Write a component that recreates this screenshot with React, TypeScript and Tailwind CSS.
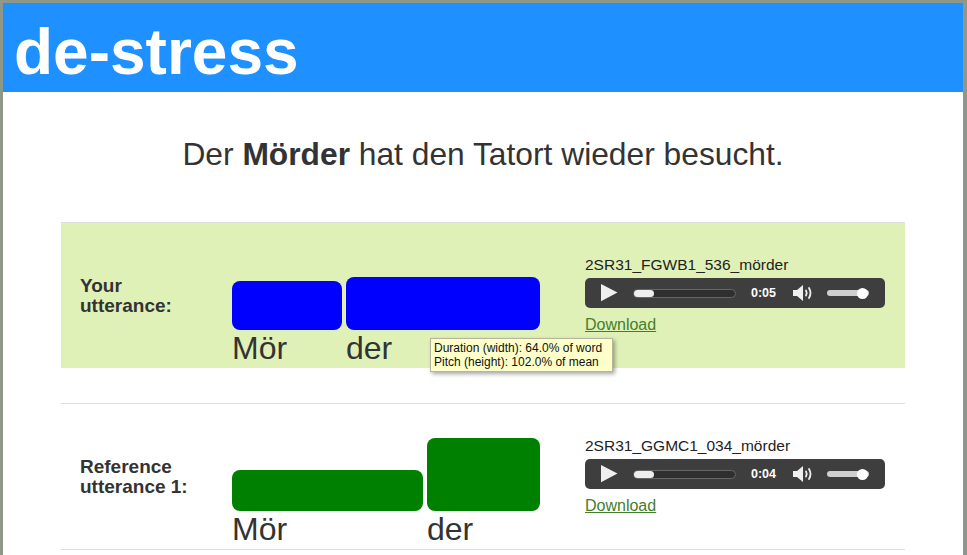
import React from 'react'

type Word = { text: string; w: number; h: number }

const font = { fontFamily: '"Liberation Sans", Arial, sans-serif' }

const Player = ({ time }: { time: string }) => (
  <div className="flex h-[30px] w-[300px] items-center rounded-[5px] bg-[#3e3e3e]">
    <svg width="17" height="18" viewBox="0 0 17 18" className="ml-[16px]">
      <path d="M0 0 L16.5 8.6 L0 17.2 Z" fill="#efefef" />
    </svg>
    <div className="ml-[15px] flex h-[9px] w-[103px] rounded-full border border-[#666] bg-[#2f2f2f]">
      <div className="h-full w-[20px] rounded-full bg-[#eeeeee]" />
    </div>
    <span className="ml-[15px] text-[12.5px] font-bold text-white">{time}</span>
    <svg width="23" height="18" viewBox="0 0 23 18" className="ml-[16px]">
      <path d="M1 6 H5 L11 1 V17 L5 12 H1 Z" fill="#efefef" />
      <path d="M14 6.5 Q15.5 9 14 11.5" stroke="#efefef" strokeWidth="1.8" fill="none" strokeLinecap="round" />
      <path d="M17 4 Q20 9 17 14" stroke="#efefef" strokeWidth="1.8" fill="none" strokeLinecap="round" />
    </svg>
    <div className="ml-[12px] flex h-[6px] w-[42px] items-center justify-end rounded-full bg-[#cfcfcf] pr-[1px]">
      <div className="h-[11px] w-[11px] rounded-full bg-white" />
    </div>
  </div>
)

const Row = ({
  label,
  words,
  color,
  file,
  time,
  bg,
  children,
}: {
  label: React.ReactNode
  words: Word[]
  color: string
  file: string
  time: string
  bg: string
  children?: React.ReactNode
}) => (
  <div className={`relative flex h-[145px] items-center ${bg}`}>
    <div className="w-[171px] pl-[19px] text-[19px] font-bold leading-[20px] text-[#333]">{label}</div>
    <div className="flex w-[353px] items-end gap-[4px] self-end pb-[2px]">
      {words.map((wd) => (
        <div key={wd.text + wd.w} className="flex flex-col">
          <div className="rounded-[8px]" style={{ width: wd.w, height: wd.h, backgroundColor: color }} />
          <span className="text-[32px] leading-[36px] text-[#333]">{wd.text}</span>
        </div>
      ))}
    </div>
    <div className="flex flex-col">
      <span className="text-[15.5px] leading-[18px] text-[#222]">{file}</span>
      <div className="mt-[4px]">
        <Player time={time} />
      </div>
      <a className="mt-[7px] text-[16px] leading-[20px] text-[#44802c] underline">Download</a>
    </div>
    {children}
  </div>
)

export default function App() {
  return (
    <div
      className="h-[555px] overflow-hidden border-t-[3px] border-r-[4px] border-l-[3px] border-[#8e9888] bg-white"
      style={font}
    >
      <div className="h-[89px] bg-[#1e90ff] pl-[11px] pt-[17px]">
        <h1 className="text-[64px] font-bold leading-[64px] text-white">de-stress</h1>
      </div>
      <p className="pt-[42px] pb-[48px] text-center text-[31.75px] leading-[40px] text-[#333]">
        Der <b>Mörder</b> hat den Tatort wieder besucht.
      </p>
      <div className="mx-auto w-[844px] border-t border-[#dddddd]">
        <Row
          label={<>Your<br />utterance:</>}
          words={[
            { text: 'Mör', w: 110, h: 49 },
            { text: 'der', w: 194, h: 53 },
          ]}
          color="#0000ff"
          file="2SR31_FGWB1_536_mörder"
          time="0:05"
          bg="bg-[#e0f1b8]"
        >
          <div className="absolute left-[369px] top-[115px] w-[183px] border border-[#b5b5a0] bg-[#ffffca] px-[3px] py-[2px] text-[12px] leading-[14px] text-[#111] shadow-[2px_2px_4px_rgba(0,0,0,0.35)]">
            <div>Duration (width): 64.0% of word</div>
            <div>Pitch (height): 102.0% of mean</div>
          </div>
        </Row>
        <div className="h-[36px] border-b border-[#dddddd]" />
        <Row
          label={<>Reference<br />utterance 1:</>}
          words={[
            { text: 'Mör', w: 191, h: 41 },
            { text: 'der', w: 113, h: 73 },
          ]}
          color="#008000"
          file="2SR31_GGMC1_034_mörder"
          time="0:04"
          bg="bg-white"
        />
        <div className="border-t border-[#dddddd]" />
      </div>
    </div>
  )
}
